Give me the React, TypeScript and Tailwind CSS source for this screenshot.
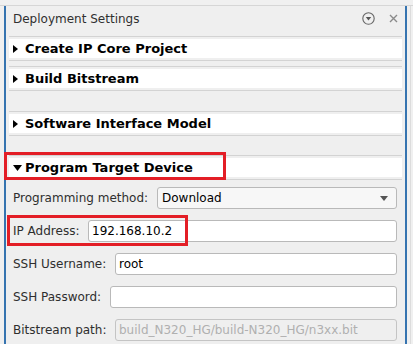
import React from "react";

function Header({ title, open }: { title: string; open?: boolean }) {
  return (
    <div className="border-t border-b border-[#d3d3d3] py-[2px] mx-[3px]">
      <div className="bg-white h-[19px] flex items-center pl-[4px]">
        <span className="w-[12px] flex items-center">
          {open ? (
            <svg width="9" height="6" viewBox="0 0 9 6"><path d="M0 0h9L4.5 6z" fill="#000" /></svg>
          ) : (
            <svg width="5" height="8" viewBox="0 0 5 8"><path d="M0 0l5 4-5 4z" fill="#000" /></svg>
          )}
        </span>
        <span className="font-bold text-[13px] text-black leading-none">{title}</span>
      </div>
    </div>
  );
}

function Field({ label, value, left, disabled }: { label: string; value: string; left: number; disabled?: boolean }) {
  return (
    <div className="flex items-center h-[22px]">
      <span className="text-[12px] text-[#2e2e2e] pl-[7px] shrink-0" style={{ width: left }}>{label}</span>
      <div
        className={
          "flex-1 h-[22px] rounded-[3px] border flex items-center pl-[3px] text-[12px] " +
          (disabled ? "bg-[#efefef] border-[#c4c4c4] text-[#b0b0b0]" : "bg-white border-[#b9b9b9] text-black")
        }
      >
        {value}
      </div>
    </div>
  );
}

export default function App() {
  return (
    <div className="w-[413px] h-[344px] overflow-hidden bg-[#f0f0f0] font-['DejaVu_Sans',sans-serif]">
      <div className="h-[6px] border-b border-[#d6d6d6]" />
      <div className="flex h-[338px]">
        <div className="w-[4px]" />
        <div className="w-[403px] border-l-2 border-r-2 border-[#3674b0] bg-[#efefef]">
          {/* title bar */}
          <div className="flex items-center h-[25px] pl-[7px] pr-[7px]">
            <span className="text-[12px] text-[#303030] mt-[1px]">Deployment Settings</span>
            <div className="ml-auto flex items-center gap-[14px]">
              <svg width="13" height="13" viewBox="0 0 13 13">
                <circle cx="6.5" cy="6.5" r="5.7" fill="none" stroke="#666" strokeWidth="1.1" />
                <path d="M3.8 5h5.4L6.5 8.4z" fill="#555" />
              </svg>
              <svg width="9" height="9" viewBox="0 0 9 9">
                <path d="M1 1l7 7M8 1l-7 7" stroke="#8a8a8a" strokeWidth="1.4" />
              </svg>
            </div>
          </div>
          <div className="mt-[5px]">
            <Header title="Create IP Core Project" />
          </div>
          <div className="mt-[5px]">
            <Header title="Build Bitstream" />
          </div>
          <div className="mt-[20px]">
            <Header title="Software Interface Model" />
          </div>
          <div className="mt-[19px] relative">
            <Header title="Program Target Device" open />
            <div className="absolute left-[-2px] top-[-3px] w-[222px] h-[28px] border-[3px] border-[#e31e26]" />
          </div>
          <div className="pr-[8px] mt-[7px] flex flex-col gap-[11px]">
            <div className="flex items-center h-[22px]">
              <span className="text-[12px] text-[#2e2e2e] pl-[7px] w-[151px] shrink-0">Programming method:</span>
              <div className="flex-1 h-[22px] rounded-[3px] border border-[#b9b9b9] bg-[#f7f7f7] flex items-center pl-[4px] pr-[8px] text-[12px] text-black">
                Download
                <svg className="ml-auto" width="8" height="5" viewBox="0 0 8 5"><path d="M0 0h8L4 5z" fill="#555" /></svg>
              </div>
            </div>
            <div className="relative">
              <Field label="IP Address:" value="192.168.10.2" left={82} />
              <div className="absolute left-[1px] top-[-5px] w-[181px] h-[31px] border-[3px] border-[#e31e26]" />
            </div>
            <Field label="SSH Username:" value="root" left={109} />
            <Field label="SSH Password:" value="" left={104} />
            <Field label="Bitstream path:" value="build_N320_HG/build-N320_HG/n3xx.bit" left={109} disabled />
          </div>
        </div>
        <div className="w-[3px]" />
        <div className="w-[1px] bg-[#dcdcdc]" />
      </div>
    </div>
  );
}
